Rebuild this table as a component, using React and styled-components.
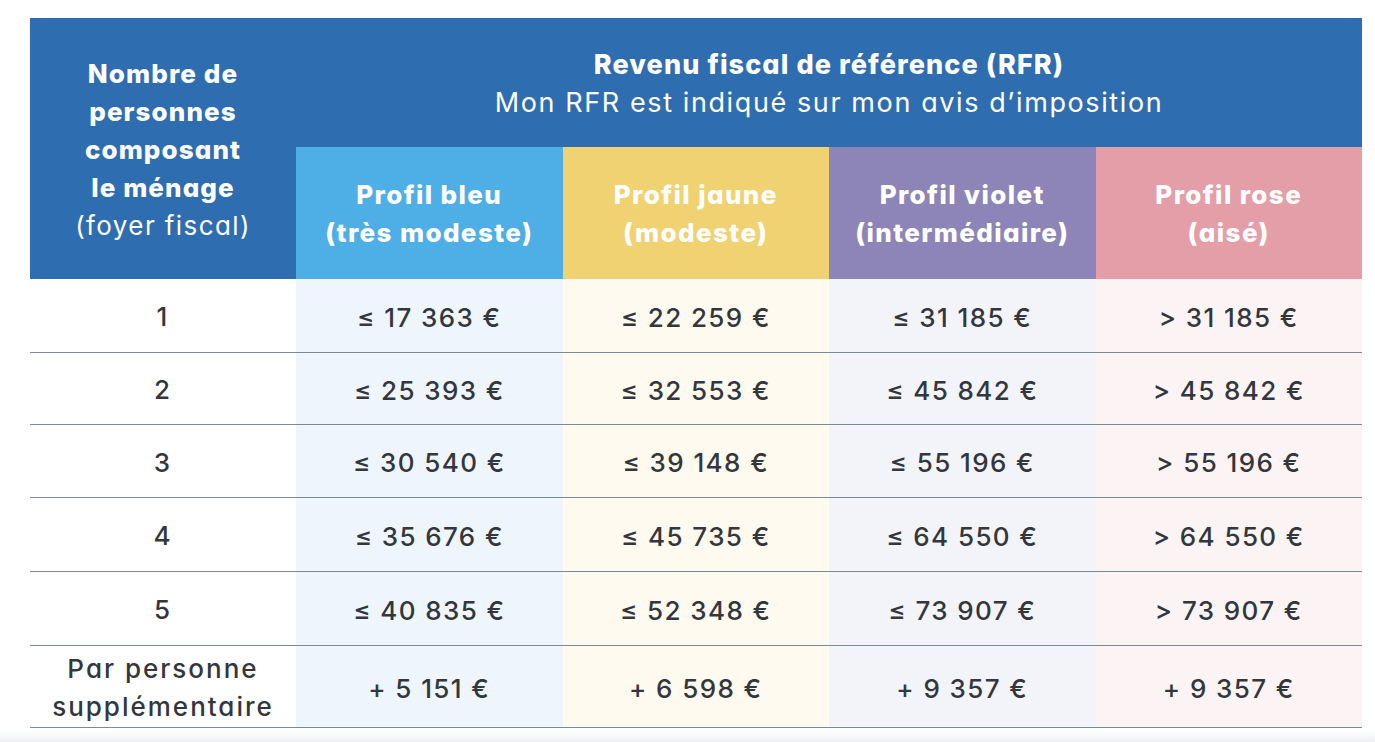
import styled, { createGlobalStyle } from "styled-components"

const PROFILES = [
  { name: "Profil bleu", sub: "(très modeste)", head: "#4eaee6", tint: "#eef5fc" },
  { name: "Profil jaune", sub: "(modeste)", head: "#f1d273", tint: "#fffaf0" },
  { name: "Profil violet", sub: "(intermédiaire)", head: "#8d85b8", tint: "#f3f3fa" },
  { name: "Profil rose", sub: "(aisé)", head: "#e39ea7", tint: "#fcf4f4" },
]

const ROWS = [
  { size: "1", values: ["≤ 17 363 €", "≤ 22 259 €", "≤ 31 185 €", "> 31 185 €"] },
  { size: "2", values: ["≤ 25 393 €", "≤ 32 553 €", "≤ 45 842 €", "> 45 842 €"] },
  { size: "3", values: ["≤ 30 540 €", "≤ 39 148 €", "≤ 55 196 €", "> 55 196 €"] },
  { size: "4", values: ["≤ 35 676 €", "≤ 45 735 €", "≤ 64 550 €", "> 64 550 €"] },
  { size: "5", values: ["≤ 40 835 €", "≤ 52 348 €", "≤ 73 907 €", "> 73 907 €"] },
  { size: "Par personne\nsupplémentaire", values: ["+ 5 151 €", "+ 6 598 €", "+ 9 357 €", "+ 9 357 €"] },
]

function App() {
  return (
    <>
      <GlobalStyle />
      <Page>
        <Table>
          <HouseholdHead>
            <strong>Nombre de<br />personnes<br />composant<br />le ménage</strong>
            <span>(foyer fiscal)</span>
          </HouseholdHead>
          <RfrHead>
            <strong>Revenu fiscal de référence (RFR)</strong>
            <span>Mon RFR est indiqué sur mon avis d’imposition</span>
          </RfrHead>
          {PROFILES.map((p) => (
            <ProfileHead key={p.name} $bg={p.head}>
              {p.name}
              <br />
              {p.sub}
            </ProfileHead>
          ))}
          {ROWS.map((row) => (
            <Row key={row.size}>
              <SizeCell>{row.size}</SizeCell>
              {row.values.map((v, i) => (
                <Cell key={i} $bg={PROFILES[i].tint}>{v}</Cell>
              ))}
            </Row>
          ))}
        </Table>
      </Page>
    </>
  )
}

const GlobalStyle = createGlobalStyle`
  body {
    margin: 0;
    background: #ffffff;
    font-family: Inter, "Noto Sans", sans-serif;
    font-feature-settings: "cv11";
  }
`

const Page = styled.div`
  padding: 18px 0 0 30px;
  min-height: 742px;
  box-sizing: border-box;
  background: linear-gradient(to bottom, #ffffff 0, #ffffff 730px, #eef0f3 742px);
`

const Table = styled.div`
  display: grid;
  grid-template-columns: 266px repeat(4, 266.5px);
  grid-template-rows: 129px 132px 74px 72px 73px 74px 74px 82px;
  width: 1332px;
`

const HouseholdHead = styled.div`
  grid-row: 1 / span 2;
  background: #2f6db1;
  color: #ffffff;
  display: flex;
  flex-direction: column;
  align-items: center;
  justify-content: center;
  text-align: center;
  font-size: 26px;
  line-height: 38px;
  padding-top: 2px;

  strong {
    font-weight: 800;
    letter-spacing: 1.1px;
  }

  span {
    font-weight: 400;
    letter-spacing: 1.4px;
  }
`

const RfrHead = styled.div`
  grid-column: 2 / span 4;
  background: #2f6db1;
  color: #ffffff;
  display: flex;
  flex-direction: column;
  align-items: center;
  justify-content: center;
  font-size: 27px;
  line-height: 38px;
  padding-top: 2px;

  strong {
    font-weight: 800;
    letter-spacing: 1.1px;
  }

  span {
    font-weight: 400;
    letter-spacing: 1.6px;
  }
`

const ProfileHead = styled.div`
  background: ${(p) => p.$bg};
  color: #ffffff;
  display: flex;
  align-items: center;
  justify-content: center;
  text-align: center;
  font-size: 26px;
  font-weight: 800;
  line-height: 38px;
  letter-spacing: 1.4px;
  padding-top: 2px;
`

const Row = styled.div`
  display: contents;
`

const SizeCell = styled.div`
  display: flex;
  align-items: center;
  justify-content: center;
  text-align: center;
  white-space: pre-line;
  background: #ffffff;
  border-bottom: 1.5px solid #7b8a97;
  color: #33373d;
  font-size: 26px;
  line-height: 38px;
  font-weight: 500;
  letter-spacing: 2px;
  padding-top: 3px;
`

const Cell = styled.div`
  display: flex;
  align-items: center;
  justify-content: center;
  background: ${(p) => p.$bg};
  border-bottom: 1.5px solid #7b8a97;
  color: #33373d;
  font-size: 26px;
  font-weight: 500;
  letter-spacing: 1.4px;
  padding-top: 3px;
`

export default App
